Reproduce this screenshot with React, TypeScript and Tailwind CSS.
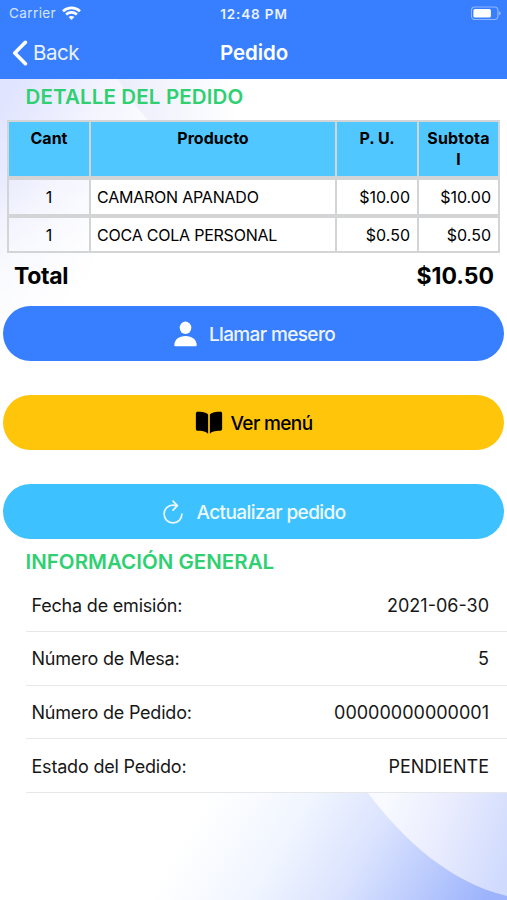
import type { ReactNode } from 'react';
import { IoBook } from 'react-icons/io5';

const items = [
  { cant: '1', producto: 'CAMARON APANADO', pu: '$10.00', subtotal: '$10.00' },
  { cant: '1', producto: 'COCA COLA PERSONAL', pu: '$0.50', subtotal: '$0.50' },
];

const info = [
  { label: 'Fecha de emisión:', value: '2021-06-30' },
  { label: 'Número de Mesa:', value: '5' },
  { label: 'Número de Pedido:', value: '00000000000001' },
  { label: 'Estado del Pedido:', value: 'PENDIENTE' },
];

function Backdrop() {
  return (
    <svg className="absolute inset-0 h-full w-full" viewBox="0 0 507 900" aria-hidden="true">
      <defs>
        <linearGradient id="topLeft" gradientUnits="userSpaceOnUse" x1="0" y1="110" x2="140" y2="190">
          <stop offset="0" stopColor="#e0e4fe" />
          <stop offset="0.5" stopColor="#f3f4fe" />
          <stop offset="1" stopColor="#ffffff" />
        </linearGradient>
        <linearGradient id="fade" gradientUnits="userSpaceOnUse" x1="0" y1="180" x2="0" y2="360">
          <stop offset="0" stopColor="#ffffff" stopOpacity="0" />
          <stop offset="1" stopColor="#ffffff" />
        </linearGradient>
        <linearGradient id="sheen" gradientUnits="userSpaceOnUse" x1="120" y1="90" x2="235" y2="85">
          <stop offset="0" stopColor="#ebedfb" />
          <stop offset="1" stopColor="#ffffff" />
        </linearGradient>
        <linearGradient id="bottom" gradientUnits="userSpaceOnUse" x1="215" y1="790" x2="460" y2="940">
          <stop offset="0" stopColor="#ffffff" />
          <stop offset="0.3" stopColor="#f0f5ff" />
          <stop offset="0.55" stopColor="#dce4fe" />
          <stop offset="1" stopColor="#9db4fc" />
        </linearGradient>
        <linearGradient id="disc" gradientUnits="userSpaceOnUse" x1="385" y1="800" x2="515" y2="845">
          <stop offset="0" stopColor="#f8faff" />
          <stop offset="0.5" stopColor="#e8ebfe" />
          <stop offset="1" stopColor="#cfdafd" />
        </linearGradient>
      </defs>
      <rect width="507" height="900" fill="#ffffff" />
      <rect y="79" width="200" height="282" fill="url(#topLeft)" />
      <rect y="79" width="200" height="282" fill="url(#fade)" />
      <path d="M118 79Q128 98 148 120H250V79Z" fill="url(#sheen)" />
      <rect y="793" width="507" height="107" fill="url(#bottom)" />
      <path d="M368 793C402 838 448 882 507 896V793Z" fill="url(#disc)" />
    </svg>
  );
}

function PersonIcon() {
  return (
    <svg className="mr-[12px] h-[26px] w-[23px]" viewBox="0 0 23 26" fill="#fff">
      <ellipse cx="11.5" cy="6.8" rx="5.8" ry="6.2" />
      <path d="M0.3 24.2C0.3 18.6 5 15 11.5 15S22.7 18.6 22.7 24.2Q22.7 25.2 21.6 25.2H1.4Q0.3 25.2 0.3 24.2Z" />
    </svg>
  );
}

function RefreshIcon() {
  return (
    <svg className="mr-[13px] h-[24px] w-[20px]" viewBox="0 0 20 24" fill="none" stroke="currentColor" strokeWidth="1.7" strokeLinecap="round" strokeLinejoin="round">
      <path d="M13.9 5.9C12.8 5.3 11.5 5.1 10 5.1A8.9 8.9 0 1 0 18.9 14" />
      <path d="M10 1.1L14.4 5.7L10 10.1" />
    </svg>
  );
}

function StatusBar() {
  return (
    <div className="grid h-[27px] grid-cols-3 items-center px-[9px] text-[13.5px] leading-none">
      <div className="flex items-center gap-[6px] pt-[1px]">
        <span className="tracking-[0.4px] text-[#d5e3ff]">Carrier</span>
        <svg className="-mt-[2px] h-[14px] w-[19px]" viewBox="0 0 19 14" fill="none" stroke="#fff" strokeWidth="2.6">
          <path d="M1 5.2C5.8.7 13.2.7 18 5.2" />
          <path d="M4.1 8.5C7.2 5.7 11.8 5.7 14.9 8.5" />
          <path d="M9.5 14L6.6 11.1C8.2 9.6 10.8 9.6 12.4 11.1Z" fill="#fff" stroke="none" />
        </svg>
      </div>
      <span className="pt-[2px] pl-[1px] text-center font-semibold tracking-[0.85px] text-[#eaf1ff]">12:48 PM</span>
      <svg className="-mr-[5px] h-[15px] w-[32px] justify-self-end" viewBox="0 0 32 15">
        <rect x="0.4" y="1" width="26.5" height="12.5" rx="3.5" fill="none" stroke="#8fb5ff" strokeWidth="1.2" />
        <rect x="2.4" y="3" width="17.5" height="8.6" rx="1.7" fill="#fff" />
        <path d="M27.8 5.2Q29.8 5.8 29.8 7.3T27.8 9.5Z" fill="#8fb5ff" />
      </svg>
    </div>
  );
}

function NavBar() {
  return (
    <div className="grid h-[52px] grid-cols-3 items-center text-white">
      <button className="flex items-center gap-[5px] pl-[12px] text-[20.5px] leading-none tracking-[-0.5px] text-[#eaf1ff]">
        <svg className="-mt-[1px] h-[26px] w-[16px]" viewBox="0 0 16 26" fill="none" stroke="#fff" strokeWidth="3.6" strokeLinecap="round" strokeLinejoin="round">
          <path d="M13.4 2.3L2.8 13L13.4 23.7" />
        </svg>
        Back
      </button>
      <h1 className="pl-[1px] text-center text-[20.5px] leading-none font-semibold tracking-[-0.1px]">Pedido</h1>
    </div>
  );
}

function PillButton({ className, children }: { className: string; children: ReactNode }) {
  return (
    <button className={`flex h-[55px] w-full items-center justify-center rounded-[28px] pl-[2px] text-[19px] leading-none font-medium tracking-[-0.62px] ${className}`}>
      {children}
    </button>
  );
}

export default function App() {
  return (
    <div className="relative h-[900px] w-[507px] overflow-hidden bg-white font-[Inter,'Liberation_Sans',sans-serif] text-black">
      <Backdrop />
      <div className="relative flex h-full flex-col">
        <header className="h-[79px] shrink-0 bg-[#387fff]">
          <StatusBar />
          <NavBar />
        </header>

        <h2 className="h-[41px] pl-[25.5px] text-[20.5px] leading-[36px] font-semibold tracking-[0.15px] text-[#2fd072]">
          DETALLE DEL PEDIDO
        </h2>

        <section className="mx-[7px] flex h-[133px] flex-col gap-[4px] border-2 border-[#d3d4d5] text-[16px]">
          <div className="grid h-[54px] shrink-0 grid-cols-[80px_244px_80px_1fr] gap-[2px] bg-[#d3d4d5] text-center leading-[20.5px] font-bold *:bg-[#50c8ff] *:pt-[6px]">
            <span>Cant</span>
            <span>Producto</span>
            <span>P. U.</span>
            <span className="tracking-[0.15px]">Subtota<br />l</span>
          </div>
          {items.map((item) => (
            <div
              key={item.producto}
              className="grid h-[33.5px] grid-cols-[82px_246px_82px_1fr] leading-[31.5px] shadow-[0_-4px_0_#d3d4d5] *:border-r-2 *:border-[#d3d4d5] *:pt-[2px]"
            >
              <span className="text-center">{item.cant}</span>
              <span className="bg-white pl-[6px] tracking-[-0.22px]">{item.producto}</span>
              <span className="bg-white pr-[7px] text-right">{item.pu}</span>
              <span className="border-r-0! bg-white pr-[7px] text-right">{item.subtotal}</span>
            </div>
          ))}
        </section>

        <div className="flex h-[53px] justify-between pr-[13px] pl-[14px] text-[23px] leading-[46px] font-bold">
          <span className="tracking-[-0.3px]">Total</span>
          <span>$10.50</span>
        </div>

        <div className="flex flex-col gap-[34px] px-[3px]">
          <PillButton className="bg-[#387fff] text-[#eef4ff]">
            <PersonIcon />
            <span className="pt-[1px]">Llamar mesero</span>
          </PillButton>
          <PillButton className="bg-[#fec50b] text-black">
            <IoBook className="mr-[8px] -ml-[2px] size-[28px]" />
            <span className="pt-[1px]">Ver menú</span>
          </PillButton>
          <PillButton className="bg-[#3dc2ff] text-[#eef9ff]">
            <RefreshIcon />
            <span className="pt-[1px] tracking-[-0.58px]">Actualizar pedido</span>
          </PillButton>
        </div>

        <h2 className="h-[39px] pl-[25.5px] text-[20.5px] leading-[45px] font-semibold tracking-[0.02px] text-[#2fd072]">
          INFORMACIÓN GENERAL
        </h2>

        <dl className="flex flex-col bg-white pl-[26px] text-[18px] text-[#171717]">
          {info.map((row) => (
            <div key={row.label} className="flex h-[53.8px] items-center justify-between border-b border-[#e5e7e9] pt-[1.4px] pr-[18px] pl-[5.5px]">
              <dt className="tracking-[-0.2px]">{row.label}</dt>
              <dd>{row.value}</dd>
            </div>
          ))}
        </dl>
      </div>
    </div>
  );
}
